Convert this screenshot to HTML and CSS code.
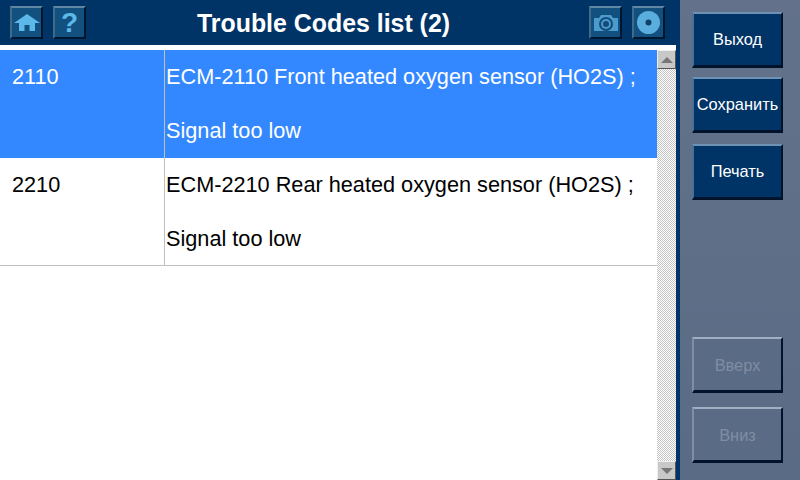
FILE: index.html
```html
<!DOCTYPE html>
<html lang="en">

<head>
  <meta charset="UTF-8">
  <meta name="viewport" content="width=device-width, initial-scale=1.0">
  <title>Trouble Codes list</title>
  <link rel="stylesheet" href="styles.css">
</head>

<body>
  <div class="screen">
    <div class="main">
      <div class="header">
        <div class="tools">
          <button class="tool">
            <svg width="26" height="18" viewBox="0 0 26 18"><path d="M13 0 L26 9 H21 V17 H15.5 V11 H10.5 V17 H5 V9 H0 Z" fill="#5cb8e8"/></svg>
          </button>
          <button class="tool help">?</button>
        </div>
        <h1>Trouble Codes list (2)</h1>
        <div class="tools">
          <button class="tool">
            <svg width="24" height="18" viewBox="0 0 24 18">
              <path d="M0 4 H5 L7 1 H17 L19 4 H24 V17 H0 Z" fill="#4b9ccc"/>
              <circle cx="12" cy="10" r="7" fill="#124a78"/>
              <circle cx="12" cy="10" r="5" fill="#4b9ccc"/>
              <circle cx="12" cy="10" r="3" fill="#124a78"/>
            </svg>
          </button>
          <button class="tool">
            <svg width="23" height="23" viewBox="0 0 23 23">
              <circle cx="11.5" cy="11.5" r="11.5" fill="#5aaedd"/>
              <circle cx="11.5" cy="11.5" r="3" fill="#0f4068"/>
            </svg>
          </button>
        </div>
      </div>
      <div class="list-area">
        <div class="list">
          <div class="row selected">
            <div class="code">2110</div>
            <div class="desc">
              <p>ECM-2110 Front heated oxygen sensor (HO2S) ;</p>
              <p>Signal too low</p>
            </div>
          </div>
          <div class="row">
            <div class="code">2210</div>
            <div class="desc">
              <p>ECM-2210 Rear heated oxygen sensor (HO2S) ;</p>
              <p>Signal too low</p>
            </div>
          </div>
        </div>
        <div class="scrollbar">
          <div class="arrow"><span class="tri up"></span></div>
          <div class="arrow"><span class="tri down"></span></div>
        </div>
      </div>
    </div>
    <div class="side">
      <div class="side-group">
        <button class="side-btn">Выход</button>
        <button class="side-btn">Сохранить</button>
        <button class="side-btn">Печать</button>
      </div>
      <div class="side-group low">
        <button class="side-btn off">Вверх</button>
        <button class="side-btn off">Вниз</button>
      </div>
    </div>
  </div>
</body>

</html>
```

FILE: styles.css
```css
html, body {
  margin: 0;
  padding: 0;
}

body {
  font-family: "Liberation Sans", Arial, sans-serif;
  background-color: #5a6b85;
}

button {
  font-family: inherit;
  padding: 0;
}

.screen {
  width: 800px;
  height: 480px;
  display: flex;
  overflow: hidden;
}

.main {
  width: 681px;
  display: flex;
  flex-direction: column;
  background-color: #003366;
}

.header {
  height: 45px;
  display: flex;
  justify-content: space-between;
  align-items: flex-start;
  padding: 6px 15px 0 10px;
  box-sizing: border-box;
  position: relative;
}

.header h1 {
  flex: 1;
  margin: 0;
  padding: 2px 28px 0 0;
  text-align: center;
  color: white;
  font-size: 24.9px;
  line-height: 30px;
  font-weight: bold;
  white-space: nowrap;
}

.tools {
  display: flex;
  gap: 10px;
}

.tool {
  width: 33px;
  height: 33px;
  display: flex;
  align-items: center;
  justify-content: center;
  background-color: #125080;
  border: 2px solid;
  border-color: #5f86a3 #00152e #00152e #3f6a8a;
  box-sizing: border-box;
}

.help {
  color: #5cb8e8;
  font-size: 28px;
  font-weight: bold;
  line-height: 1;
}

.list-area {
  height: 430px;
  margin-top: 5px;
  margin-right: 4px;
  flex: 1;
  display: flex;
  background-color: white;
  position: relative;
}

.list-area::before {
  content: "";
  position: absolute;
  top: -5px;
  left: 0;
  width: 100%;
  height: 5px;
  background-color: white;
}

.list {
  flex: 1;
}

.row {
  height: 108px;
  display: flex;
  border-bottom: 1px solid #c0c0c0;
  box-sizing: border-box;
  color: black;
  font-size: 21.7px;
}

.selected {
  height: 108px;
  background-color: #3388ff;
  color: white;
  border-bottom: none;
}

.code {
  width: 165px;
  padding: 15px 0 0 12px;
  box-sizing: border-box;
  border-right: 1px solid #c0c0c0;
  line-height: 24px;
}

.desc {
  flex: 1;
  padding: 15px 0 0 1px;
}

.desc p {
  margin: 0 0 30px;
  line-height: 24px;
  white-space: nowrap;
}

.scrollbar {
  width: 19px;
  display: flex;
  flex-direction: column;
  justify-content: space-between;
  background-color: #e8e8e8;
  background-image: repeating-conic-gradient(#c4c4c4 0 25%, white 0 50%);
  background-size: 2px 2px;
}

.arrow {
  height: 19px;
  display: flex;
  align-items: center;
  justify-content: center;
  background-color: #c8c8c8;
  border: 1px solid;
  border-color: #eeeeee #555555 #555555 #eeeeee;
  box-sizing: border-box;
}

.tri {
  width: 0;
  height: 0;
  border-left: 6px solid transparent;
  border-right: 6px solid transparent;
}

.up {
  border-bottom: 6px solid #777777;
}

.down {
  border-top: 6px solid #777777;
}

.side {
  flex: 1;
  display: flex;
  flex-direction: column;
  justify-content: space-between;
  padding: 12px 17px 17px 12px;
  box-sizing: border-box;
  background: linear-gradient(#63728a, #5a6b85);
}

.side-group {
  display: flex;
  flex-direction: column;
  gap: 10px;
}

.side-group .side-btn:nth-child(2) {
  margin-top: -1px;
  margin-bottom: 1px;
}

.low {
  gap: 14px;
}

.low .side-btn:nth-child(2) {
  margin: 0;
}

.side-btn {
  width: 91px;
  height: 56px;
  background-color: #003366;
  color: white;
  font-size: 16.4px;
  border: 2px solid;
  border-color: #6d92b3 #00132b #00132b #4a7096;
  border-bottom-width: 3px;
  box-sizing: border-box;
}

.off {
  padding-top: 2px;
  background-color: #5a6b85;
  color: #7f8da3;
  border-color: #9fb0c2 #00132b #00132b #7d8ea5;
}
```
